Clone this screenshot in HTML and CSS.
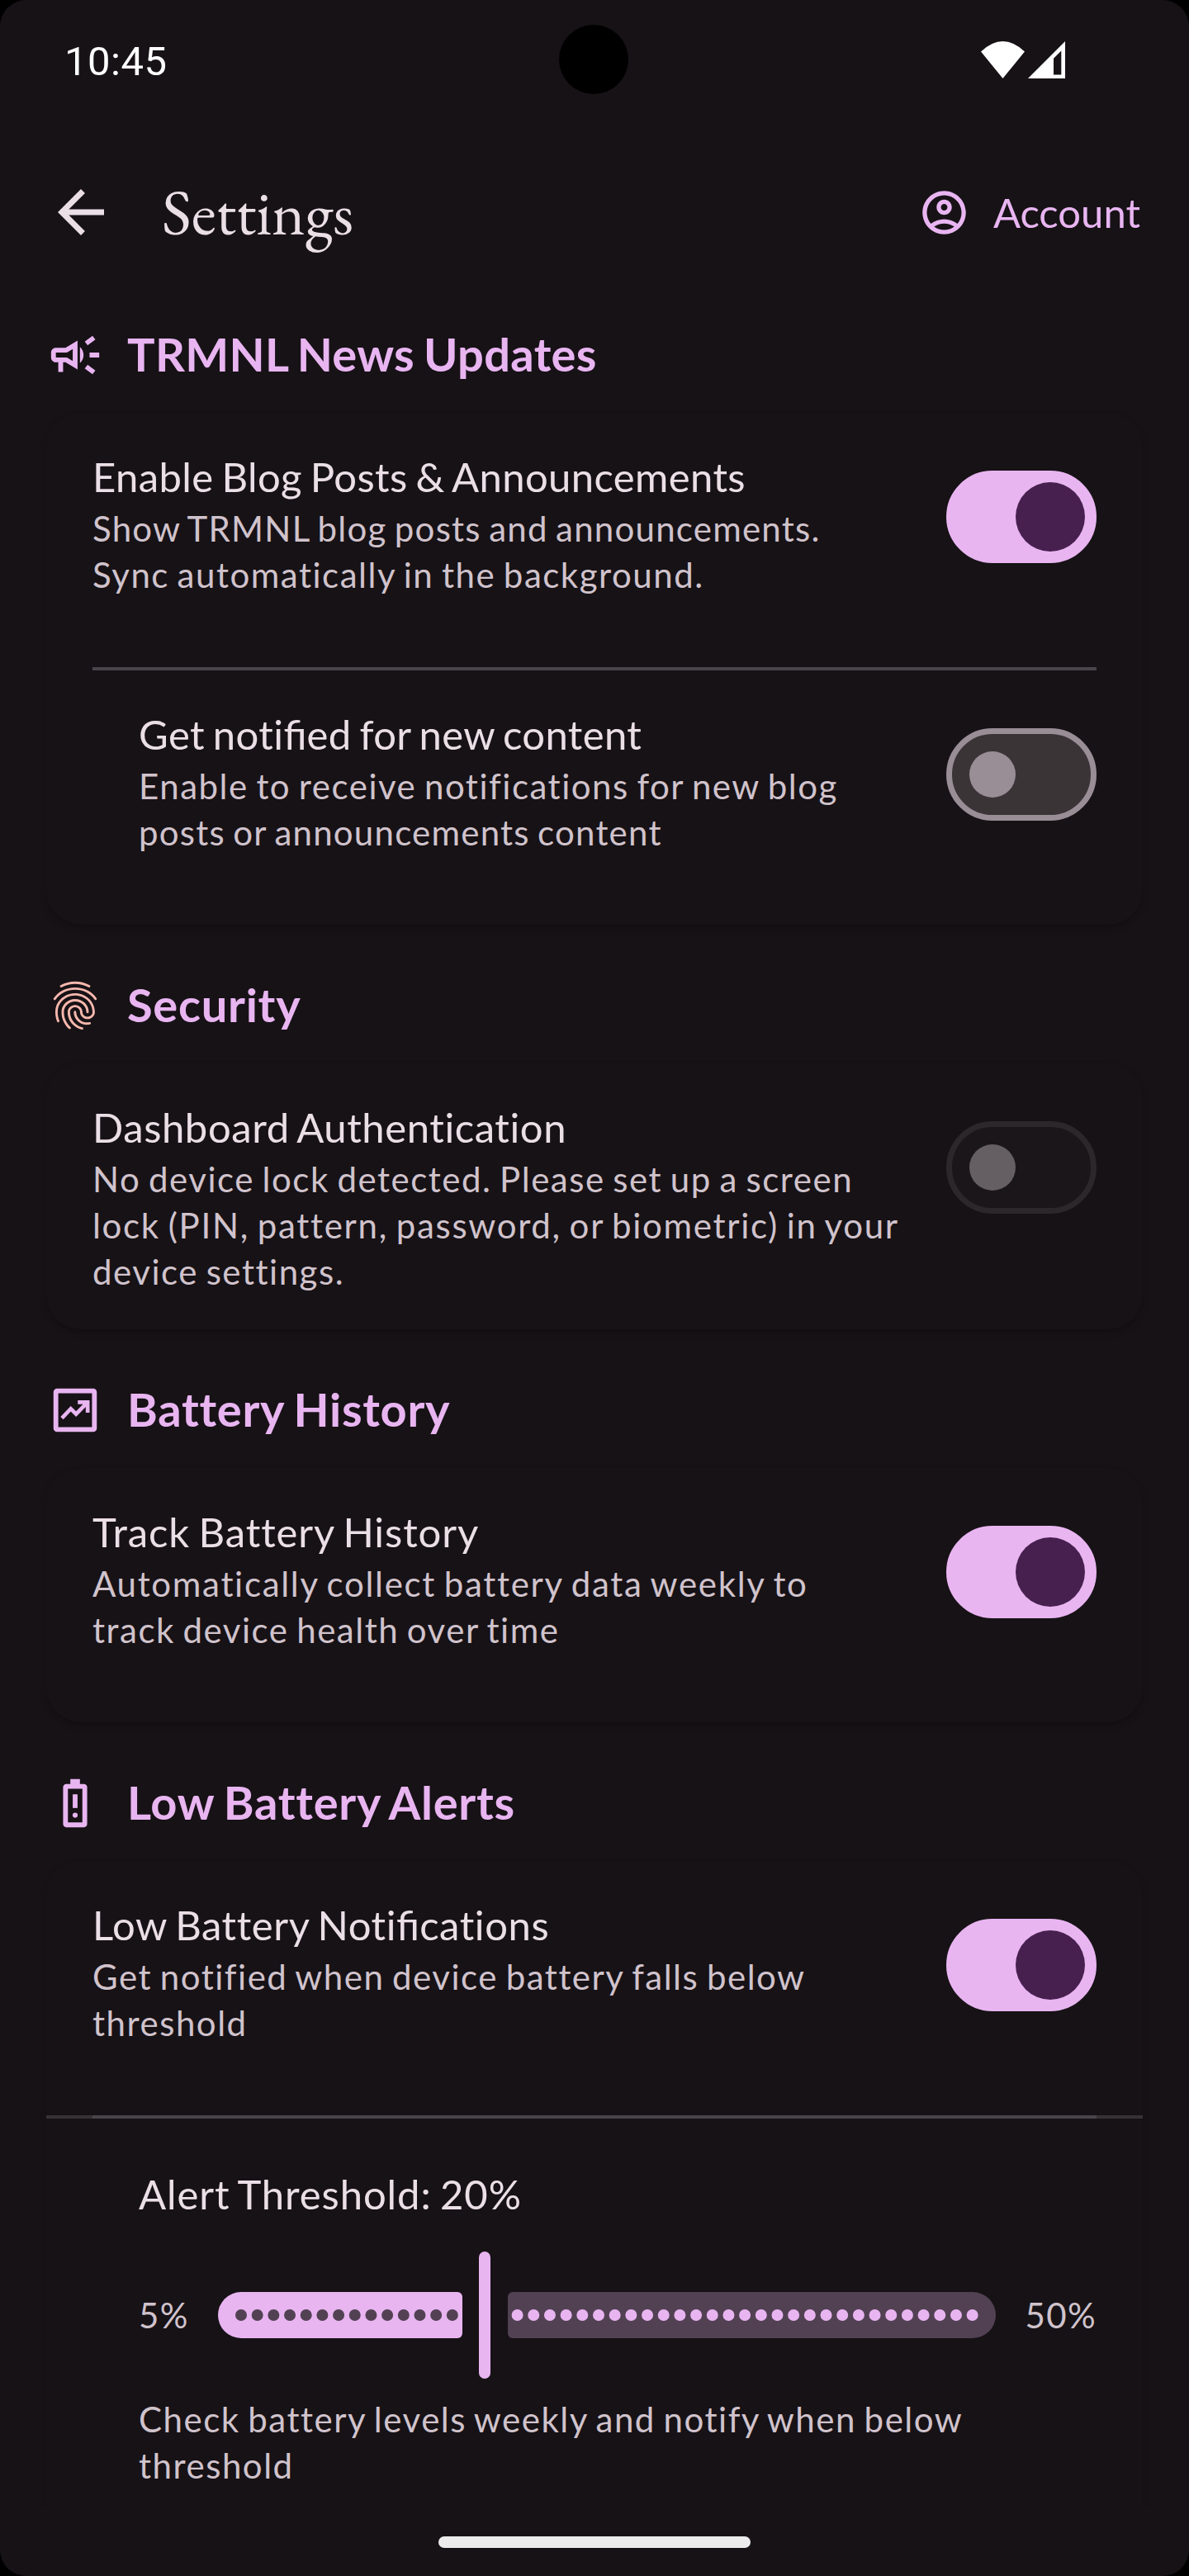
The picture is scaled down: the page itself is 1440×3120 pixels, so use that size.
FILE: index.html
```html
<!DOCTYPE html>
<html lang="en">
<head>
<meta charset="utf-8">
<title>Settings</title>
<link rel="stylesheet" href="styles.css">
</head>
<body>
<div class="screen">
  <header class="status-bar">
    <span class="clock">10:45</span>
    <span class="camera"></span>
    <span class="status-icons">
      <svg class="wifi" viewBox="0 0 53 45"><path d="M0 12.500Q26.500-12.500 53 12.500L26.500 45Z" fill="#fff"/></svg>
      <svg class="signal" viewBox="0 0 45 45"><path fill-rule="evenodd" d="M0 45L45 0V45ZM31 20.700V40.500H40.300V11.500Z" fill="#fff"/></svg>
    </span>
  </header>

  <div class="app-bar">
    <svg class="back" viewBox="0 0 24 24"><path d="M20 11H7.830l5.590-5.590L12 4l-8 8 8 8 1.410-1.410L7.830 13H20v-2z"/></svg>
    <h1 class="page-title">Settings</h1>
    <div class="account">
      <svg class="account-icon" viewBox="0 0 24 24"><path d="M12 2C6.480 2 2 6.480 2 12s4.480 10 10 10 10-4.480 10-10S17.520 2 12 2zM7.350 18.500C8.660 17.560 10.260 17 12 17s3.340.56 4.650 1.500C15.340 19.440 13.740 20 12 20s-3.340-.56-4.650-1.500zm10.790-1.380C16.450 15.800 14.320 15 12 15s-4.450.8-6.140 2.120C4.700 15.730 4 13.950 4 12c0-4.420 3.580-8 8-8s8 3.580 8 8c0 1.950-.7 3.730-1.860 5.120zM12 6c-1.930 0-3.500 1.570-3.500 3.500S10.070 13 12 13s3.500-1.570 3.500-3.500S13.930 6 12 6zm0 5c-.83 0-1.500-.67-1.500-1.500S11.170 8 12 8s1.500.67 1.500 1.500S12.830 11 12 11z"/></svg>
      <span class="account-label">Account</span>
    </div>
  </div>

  <main class="content">
    <div class="section-head">
      <svg class="section-icon" viewBox="0 0 24 24"><path d="M18 11v2h4v-2h-4zM16 17.610c.96.71 2.210 1.650 3.200 2.390.4-.53.8-1.070 1.200-1.600-.99-.74-2.240-1.680-3.200-2.400-.4.540-.8 1.080-1.200 1.610zM20.400 5.600c-.4-.53-.8-1.070-1.200-1.600-.99.740-2.240 1.680-3.200 2.400.4.530.8 1.070 1.200 1.600.96-.72 2.210-1.650 3.200-2.400zM4 9c-1.100 0-2 .9-2 2v2c0 1.100.9 2 2 2h1v4h2v-4h1l5 3V6L8 9H4zm5.030 1.710L11 9.530v4.940l-1.970-1.180-.48-.29H4v-2h4.550l.48-.29zM15.500 12c0-1.330-.58-2.530-1.500-3.350v6.690c.92-.81 1.500-2.010 1.500-3.340z"/></svg>
      <h2 class="section-title tight">TRMNL News Updates</h2>
    </div>
    <section class="card">
      <div class="setting">
        <div class="setting-text">
          <h3 class="setting-name tight">Enable Blog Posts &amp; Announcements</h3>
          <p class="setting-note"><span class="line tight">Show TRMNL blog posts and announcements.</span> <span class="line">Sync automatically in the background.</span></p>
        </div>
        <span class="switch switch-on"><span class="knob"></span></span>
      </div>
      <div class="divider"></div>
      <div class="setting setting-nested">
        <div class="setting-text">
          <h3 class="setting-name tight">Get noti<span class="liga">fi</span>ed for new content</h3>
          <p class="setting-note"><span class="line">Enable to receive notifications for new blog</span> <span class="line tight">posts or announcements content</span></p>
        </div>
        <span class="switch"><span class="knob"></span></span>
      </div>
    </section>

    <div class="section-head">
      <svg class="section-icon fingerprint" viewBox="0 0 24 24"><path d="M17.810 4.470c-.08 0-.16-.02-.23-.06C15.660 3.420 14 3 12.010 3c-1.980 0-3.860.47-5.570 1.410-.24.130-.54.040-.68-.2-.13-.24-.04-.55.2-.68C7.820 2.520 9.860 2 12.010 2c2.130 0 3.990.47 6.030 1.520.25.130.34.430.21.670-.09.180-.26.280-.44.280zM3.500 9.720c-.1 0-.2-.03-.29-.09-.23-.16-.28-.47-.12-.7.990-1.400 2.250-2.500 3.750-3.270C9.980 4.040 14 4.030 17.150 5.650c1.500.77 2.760 1.860 3.750 3.250.16.220.11.540-.12.700-.23.160-.54.110-.7-.12-.9-1.260-2.040-2.250-3.390-2.940-2.870-1.470-6.540-1.470-9.400.01-1.360.7-2.500 1.700-3.400 2.960-.08.140-.23.210-.39.210zm6.250 12.070c-.13 0-.26-.05-.35-.15-.87-.87-1.340-1.430-2.010-2.640-.69-1.230-1.050-2.730-1.050-4.340 0-2.970 2.540-5.390 5.660-5.390s5.660 2.420 5.660 5.390c0 .28-.22.500-.5.500s-.5-.22-.5-.5c0-2.420-2.090-4.390-4.660-4.390-2.570 0-4.660 1.970-4.660 4.390 0 1.440.32 2.770.93 3.850.64 1.150 1.080 1.640 1.850 2.420.19.200.19.510 0 .71-.11.100-.24.150-.37.150zm7.170-1.850c-1.190 0-2.240-.3-3.100-.89-1.490-1.010-2.380-2.650-2.380-4.390 0-.28.22-.5.500-.5s.5.220.5.500c0 1.410.72 2.740 1.940 3.560.71.480 1.540.71 2.540.71.240 0 .64-.03 1.040-.1.270-.05.530.13.580.41.050.27-.13.530-.41.580-.57.110-1.070.12-1.210.12zM14.910 22c-.04 0-.09-.01-.13-.02-1.590-.44-2.630-1.030-3.720-2.100-1.400-1.390-2.170-3.240-2.170-5.220 0-1.620 1.380-2.940 3.080-2.940 1.700 0 3.080 1.320 3.080 2.940 0 1.070.93 1.940 2.080 1.940s2.080-.87 2.080-1.940c0-3.770-3.250-6.830-7.250-6.830-2.840 0-5.440 1.580-6.610 4.030-.39.810-.59 1.760-.59 2.800 0 .78.070 2.010.67 3.610.1.260-.03.550-.29.640-.26.100-.55-.04-.64-.29-.49-1.310-.73-2.610-.73-3.960 0-1.200.23-2.290.68-3.240 1.330-2.790 4.280-4.600 7.510-4.600 4.550 0 8.250 3.510 8.250 7.830 0 1.620-1.380 2.940-3.080 2.940s-3.080-1.320-3.080-2.940c0-1.070-.93-1.940-2.080-1.940s-2.080.87-2.080 1.940c0 1.710.66 3.310 1.870 4.510.95.940 1.860 1.460 3.270 1.850.27.070.42.350.35.610-.05.230-.26.380-.47.380z"/></svg>
      <h2 class="section-title">Security</h2>
    </div>
    <section class="card">
      <div class="setting setting-tight">
        <div class="setting-text">
          <h3 class="setting-name">Dashboard Authentication</h3>
          <p class="setting-note"><span class="line">No device lock detected. Please set up a screen</span> <span class="line wide">lock (PIN, pattern, password, or biometric) in your</span> <span class="line">device settings.</span></p>
        </div>
        <span class="switch switch-disabled"><span class="knob"></span></span>
      </div>
    </section>

    <div class="section-head">
      <svg class="section-icon" viewBox="0 0 24 24"><path fill-rule="evenodd" d="M4.500 3h15A1.500 1.500 0 0 1 21 4.500v15A1.500 1.500 0 0 1 19.500 21h-15A1.500 1.500 0 0 1 3 19.500v-15A1.500 1.500 0 0 1 4.500 3zM5 5v14h14V5z"/><path d="M6.500 15.300 10.200 11.400l2.200 2.200 4.600-4.700M13.100 8.700h4.100v4.300" fill="none" stroke="currentColor" stroke-width="1.600"/></svg>
      <h2 class="section-title">Battery History</h2>
    </div>
    <section class="card">
      <div class="setting">
        <div class="setting-text">
          <h3 class="setting-name wide">Track Battery History</h3>
          <p class="setting-note"><span class="line wide">Automatically collect battery data weekly to</span> <span class="line">track device health over time</span></p>
        </div>
        <span class="switch switch-on"><span class="knob"></span></span>
      </div>
    </section>

    <div class="section-head">
      <svg class="section-icon" viewBox="0 0 24 24"><path fill-rule="evenodd" d="M15.670 4H14V2h-4v2H8.330C7.600 4 7 4.600 7 5.330v15.330C7 21.400 7.600 22 8.330 22h7.330c.74 0 1.340-.6 1.340-1.330V5.330C17 4.600 16.400 4 15.670 4zM9 6h6v14H9z"/><path d="M11 8.300h2v5.700h-2z"/><circle cx="12" cy="17" r="1.050"/></svg>
      <h2 class="section-title">Low Battery Alerts</h2>
    </div>
    <section class="card card-open">
      <div class="setting">
        <div class="setting-text">
          <h3 class="setting-name">Low Battery Noti<span class="liga">fi</span>cations</h3>
          <p class="setting-note"><span class="line">Get notified when device battery falls below</span> <span class="line">threshold</span></p>
        </div>
        <span class="switch switch-on"><span class="knob"></span></span>
      </div>
      <div class="divider divider-full"></div>
      <div class="threshold">
        <h3 class="setting-name wide">Alert Threshold: 20%</h3>
        <div class="slider-row">
          <span class="range-label">5%</span>
          <svg class="slider" viewBox="0 0 942 154">
            <path class="fill-accent" d="M28 49H290A6 6 0 0 1 296 55V99A6 6 0 0 1 290 105H28A28 28 0 0 1 28 49Z"/>
            <path class="fill-muted" d="M357 49H914A28 28 0 0 1 914 105H357A6 6 0 0 1 351 99V55A6 6 0 0 1 357 49Z"/>
            <path class="ticks ticks-active" d="M28 77H285"/>
            <path class="ticks ticks-rest" d="M362.600 77H915"/>
            <rect class="fill-accent" x="316" y="0" width="14" height="154" rx="7"/>
          </svg>
          <span class="range-label">50%</span>
        </div>
        <p class="setting-note"><span class="line">Check battery levels weekly and notify when below</span> <span class="line">threshold</span></p>
      </div>
    </section>
  </main>
  <footer class="nav-bar"><span class="nav-handle"></span></footer>
</div>
</body>
</html>
```

FILE: styles.css
```css
* { box-sizing: border-box; }

body {
  margin: 0;
  background: #000;
  color: #ebdfe6;
  font-family: Lato, "Liberation Sans", sans-serif;
}

h1, h2, h3, p { margin: 0; font-weight: 400; }
svg { display: block; flex: none; fill: currentColor; }

.screen {
  width: 1440px;
  height: 3120px;
  display: flex;
  flex-direction: column;
  overflow: hidden;
  border-radius: 32px;
  background: #171216;
}

.status-bar {
  position: relative;
  flex: none;
  height: 145px;
  padding: 0 150px 0 78px;
  display: flex;
  justify-content: space-between;
}
.clock {
  margin-top: 46px;
  color: #fff;
  font: 400 49px/57px Roboto, sans-serif;
  letter-spacing: .5px;
}
.camera {
  position: absolute;
  left: 677px;
  top: 30px;
  width: 84px;
  height: 84px;
  border-radius: 50%;
  background: #000;
}
.status-icons { display: flex; gap: 4px; padding-top: 50px; }
.wifi { width: 53px; height: 45px; }
.signal { width: 45px; height: 45px; }

.app-bar {
  flex: none;
  height: 224px;
  padding: 0 56px;
  display: flex;
  align-items: center;
}
.back { width: 84px; height: 84px; }
.page-title {
  margin-left: 56px;
  font: 400 77px/98px "EB Garamond", "Liberation Serif", serif;
}
.account {
  margin: 0 3px 0 auto;
  display: flex;
  align-items: center;
  gap: 28px;
  color: #e8b5f1;
}
.account-icon { width: 63px; height: 63px; }
.account-label { font-size: 49px; line-height: 70px; }

.content {
  flex: none;
  height: 2667px;
  overflow: hidden;
  padding: 18px 56px 0;
}
.section-head {
  height: 84px;
  display: flex;
  align-items: center;
  gap: 28px;
  color: #e8b5f1;
}
.section-icon { width: 70px; height: 70px; margin-top: 2px; }
.fingerprint { color: #f6b8ad; }
.section-title {
  font-size: 56px;
  line-height: 84px;
  font-weight: 700;
  letter-spacing: .73px;
  word-spacing: -2.8px;
}
.section-title.tight { letter-spacing: .31px; }

.card {
  margin: 29px 0 55px;
  border-radius: 42px;
  background: #171216;
  box-shadow: 0 4px 8px -1px rgba(0, 0, 0, .28);
}
.card-open { height: 1000px; }

.setting {
  padding: 42px 56px 84px;
  display: flex;
  justify-content: space-between;
}
.setting-nested { padding-left: 112px; }
.setting-tight { padding-bottom: 42px; }
.setting-name {
  font-size: 49px;
  line-height: 70px;
  letter-spacing: .58px;
  word-spacing: -3px;
}
.setting-name.tight { letter-spacing: .38px; }
.setting-name.wide { letter-spacing: .9px; }
.liga { letter-spacing: 0; }
.setting-note {
  color: #d0c3cc;
  font-size: 42px;
  line-height: 56px;
  letter-spacing: 1.52px;
  word-spacing: -2.6px;
  white-space: nowrap;
}
.line { display: block; }
.line.tight { letter-spacing: 1.23px; }
.line.wide { letter-spacing: 1.69px; }

.switch {
  flex: none;
  width: 182px;
  height: 112px;
  margin-top: 28px;
  padding: 0 21px;
  display: flex;
  align-items: center;
  border: 7px solid #998d96;
  border-radius: 56px;
  background: #3a3437;
}
.knob { width: 56px; height: 56px; border-radius: 50%; background: #998d96; }
.switch-on {
  justify-content: flex-end;
  padding: 0 7px;
  border-color: #e8b5f1;
  background: #e8b5f1;
}
.switch-on .knob { width: 84px; height: 84px; background: #47204f; }
.switch-disabled { border-color: #2b272b; background: #1b161a; }
.switch-disabled .knob { background: #655e63; }

.divider {
  height: 4px;
  margin: 0 56px;
  background: #49444a;
}
.divider-full { margin: 0; border: solid #373134; border-width: 0 56px; }

.threshold { padding: 56px 56px 0 112px; }
.slider-row {
  height: 154px;
  margin: 35px 0 21px;
  display: flex;
  align-items: center;
  justify-content: space-between;
}
.range-label { color: #d0c3cc; font-size: 42px; line-height: 56px; letter-spacing: 1.4px; }
.slider { width: 942px; height: 154px; }
.fill-accent { fill: #e8b5f1; }
.fill-muted { fill: #524153; }
.ticks {
  fill: none;
  stroke-width: 14;
  stroke-linecap: round;
  stroke-dasharray: 0 19.680;
}
.ticks-active { stroke: #524153; }
.ticks-rest { stroke: #e8b5f1; }

.nav-bar {
  flex: 1;
  padding-top: 36px;
  display: flex;
  justify-content: center;
  align-items: flex-start;
}
.nav-handle { width: 378px; height: 14px; border-radius: 7px; background: #ececec; }
```
